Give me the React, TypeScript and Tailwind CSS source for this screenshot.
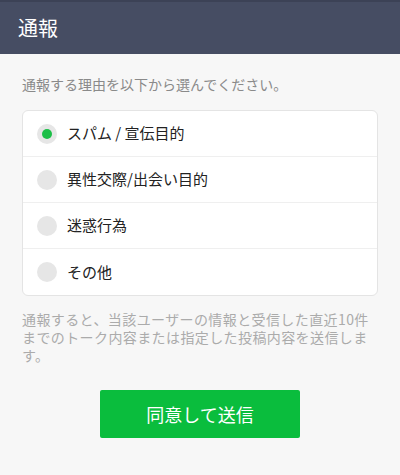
import React, { useState } from "react"

const reasons = ["スパム / 宣伝目的", "異性交際/出会い目的", "迷惑行為", "その他"]

export default function App() {
  const [selected, setSelected] = useState(0)

  return (
    <div
      className="min-h-screen bg-[#f7f7f7]"
      style={{ fontFamily: '"Noto Sans CJK JP", "Noto Sans", sans-serif' }}
    >
      <header className="h-[54px] bg-[#464d63] border-t-2 border-[#3c4256] flex items-center px-[18px]">
        <h1 className="text-[20px] text-white">通報</h1>
      </header>

      <div className="px-[22px] pt-[20px]">
        <p className="text-[14px] leading-[20px] text-[#8a8a8a]">
          通報する理由を以下から選んでください。
        </p>

        <ul className="mt-[16px] bg-white border border-[#e4e4e4] rounded-[6px] divide-y divide-[#efefef]">
          {reasons.map((r, i) => (
            <li
              key={r}
              className="h-[46px] flex items-center pl-[14px] gap-[10px] cursor-pointer"
              onClick={() => setSelected(i)}
            >
              <span className="w-[20px] h-[20px] rounded-full bg-[#e6e6e6] flex items-center justify-center">
                {selected === i && (
                  <span className="w-[10px] h-[10px] rounded-full bg-[#1bbf47]" />
                )}
              </span>
              <span className="text-[15px] text-[#222]">{r}</span>
            </li>
          ))}
        </ul>

        <p className="mt-[14px] text-[14px] leading-[18px] tracking-[0.4px] text-[#ababab]">
          通報すると、当該ユーザーの情報と受信した直近10件までのトーク内容または指定した投稿内容を送信します。
        </p>

        <div className="flex justify-center mt-[26px]">
          <button className="w-[200px] h-[48px] rounded-[2px] bg-[#0abd3d] text-white text-[18px]">
            同意して送信
          </button>
        </div>
      </div>
    </div>
  )
}
